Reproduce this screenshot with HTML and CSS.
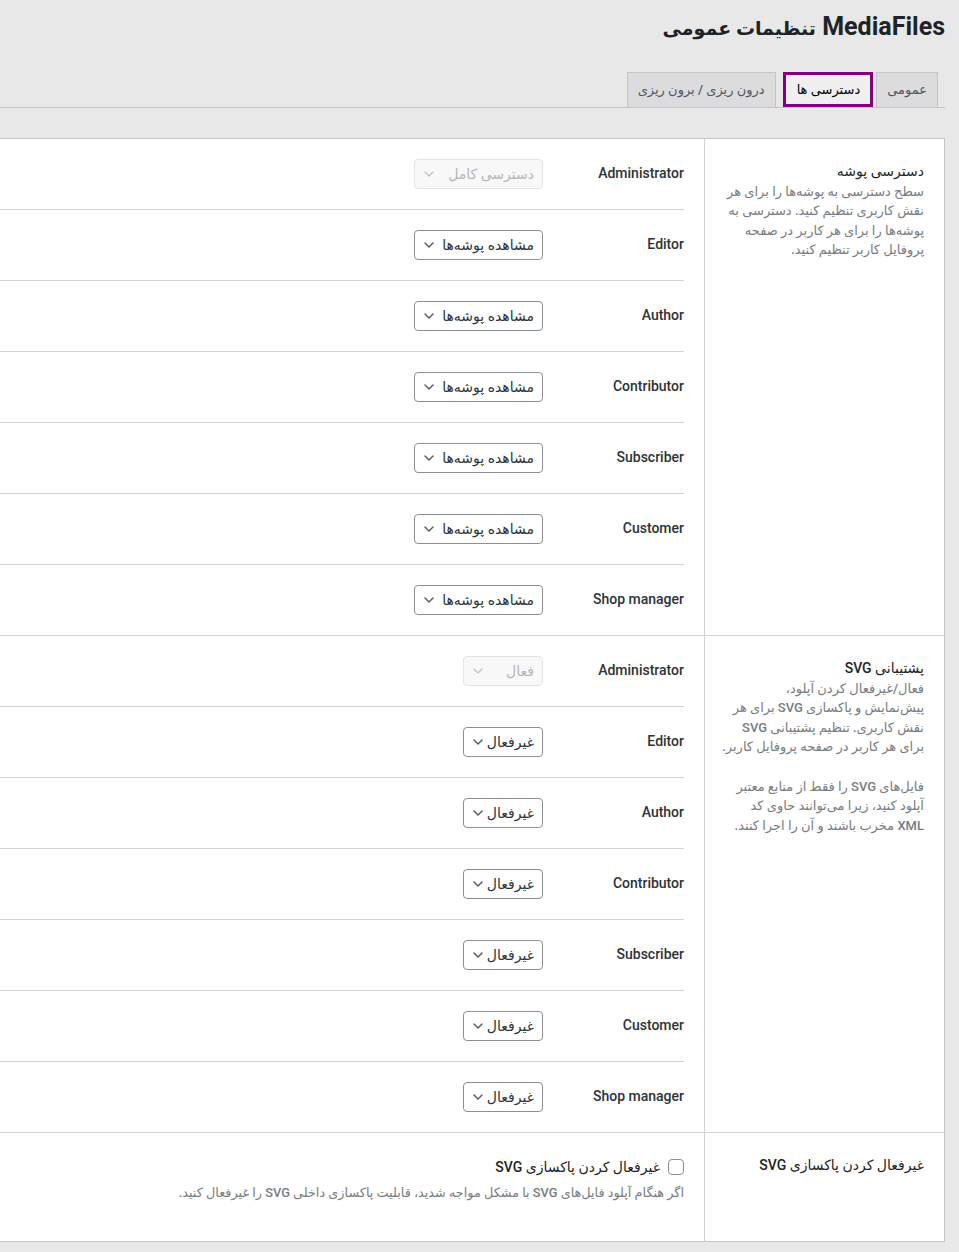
FILE: index.html
```html
<!DOCTYPE html>
<html lang="fa" dir="rtl">
<head>
<meta charset="utf-8">
<title>MediaFiles</title>
<link rel="stylesheet" href="styles.css">
</head>
<body>
<div class="wrap">
  <h1 class="title">MediaFiles <span class="title-fa">تنظیمات عمومی</span></h1>
  <nav class="tabs">
    <a class="tab tab-first">عمومی</a>
    <a class="tab tab-active">دسترسی ها</a>
    <a class="tab">درون ریزی / برون ریزی</a>
  </nav>

  <div class="panel">
    <section class="sec">
      <div class="side">
        <h3 class="side-title">دسترسی پوشه</h3>
        <p class="side-desc">سطح دسترسی به پوشه‌ها را برای هر<br>نقش کاربری تنظیم کنید. دسترسی به<br>پوشه‌ها را برای هر کاربر در صفحه<br>پروفایل کاربر تنظیم کنید.</p>
      </div>
      <div class="main">
        <div class="row"><div class="lbl">Administrator</div><div class="sel sel-wide is-disabled"><span>دسترسی کامل</span><svg class="chev" width="10" height="6" viewBox="0 0 10 6"><path d="M1 1l4 4 4-4"/></svg></div></div>
        <div class="row"><div class="lbl">Editor</div><div class="sel sel-wide"><span>مشاهده پوشه‌ها</span><svg class="chev" width="10" height="6" viewBox="0 0 10 6"><path d="M1 1l4 4 4-4"/></svg></div></div>
        <div class="row"><div class="lbl">Author</div><div class="sel sel-wide"><span>مشاهده پوشه‌ها</span><svg class="chev" width="10" height="6" viewBox="0 0 10 6"><path d="M1 1l4 4 4-4"/></svg></div></div>
        <div class="row"><div class="lbl">Contributor</div><div class="sel sel-wide"><span>مشاهده پوشه‌ها</span><svg class="chev" width="10" height="6" viewBox="0 0 10 6"><path d="M1 1l4 4 4-4"/></svg></div></div>
        <div class="row"><div class="lbl">Subscriber</div><div class="sel sel-wide"><span>مشاهده پوشه‌ها</span><svg class="chev" width="10" height="6" viewBox="0 0 10 6"><path d="M1 1l4 4 4-4"/></svg></div></div>
        <div class="row"><div class="lbl">Customer</div><div class="sel sel-wide"><span>مشاهده پوشه‌ها</span><svg class="chev" width="10" height="6" viewBox="0 0 10 6"><path d="M1 1l4 4 4-4"/></svg></div></div>
        <div class="row"><div class="lbl">Shop manager</div><div class="sel sel-wide"><span>مشاهده پوشه‌ها</span><svg class="chev" width="10" height="6" viewBox="0 0 10 6"><path d="M1 1l4 4 4-4"/></svg></div></div>
      </div>
    </section>

    <section class="sec">
      <div class="side">
        <h3 class="side-title">پشتیبانی SVG</h3>
        <p class="side-desc">فعال/غیرفعال کردن آپلود،<br>پیش‌نمایش و پاکسازی SVG برای هر<br>نقش کاربری. تنظیم پشتیبانی SVG<br>برای هر کاربر در صفحه پروفایل کاربر.</p>
        <p class="side-desc side-gap">فایل‌های SVG را فقط از منابع معتبر<br>آپلود کنید، زیرا می‌توانند حاوی کد<br>XML مخرب باشند و آن را اجرا کنند.</p>
      </div>
      <div class="main">
        <div class="row"><div class="lbl">Administrator</div><div class="sel sel-narrow is-disabled"><span>فعال</span><svg class="chev" width="10" height="6" viewBox="0 0 10 6"><path d="M1 1l4 4 4-4"/></svg></div></div>
        <div class="row"><div class="lbl">Editor</div><div class="sel sel-narrow"><span>غیرفعال</span><svg class="chev" width="10" height="6" viewBox="0 0 10 6"><path d="M1 1l4 4 4-4"/></svg></div></div>
        <div class="row"><div class="lbl">Author</div><div class="sel sel-narrow"><span>غیرفعال</span><svg class="chev" width="10" height="6" viewBox="0 0 10 6"><path d="M1 1l4 4 4-4"/></svg></div></div>
        <div class="row"><div class="lbl">Contributor</div><div class="sel sel-narrow"><span>غیرفعال</span><svg class="chev" width="10" height="6" viewBox="0 0 10 6"><path d="M1 1l4 4 4-4"/></svg></div></div>
        <div class="row"><div class="lbl">Subscriber</div><div class="sel sel-narrow"><span>غیرفعال</span><svg class="chev" width="10" height="6" viewBox="0 0 10 6"><path d="M1 1l4 4 4-4"/></svg></div></div>
        <div class="row"><div class="lbl">Customer</div><div class="sel sel-narrow"><span>غیرفعال</span><svg class="chev" width="10" height="6" viewBox="0 0 10 6"><path d="M1 1l4 4 4-4"/></svg></div></div>
        <div class="row"><div class="lbl">Shop manager</div><div class="sel sel-narrow"><span>غیرفعال</span><svg class="chev" width="10" height="6" viewBox="0 0 10 6"><path d="M1 1l4 4 4-4"/></svg></div></div>
      </div>
    </section>

    <section class="sec sec-last">
      <div class="side">
        <h3 class="side-title">غیرفعال کردن پاکسازی SVG</h3>
      </div>
      <div class="main main-pad">
        <label class="check-line"><span class="checkbox"></span><span>غیرفعال کردن پاکسازی SVG</span></label>
        <p class="check-desc">اگر هنگام آپلود فایل‌های SVG با مشکل مواجه شدید، قابلیت پاکسازی داخلی SVG را غیرفعال کنید.</p>
      </div>
    </section>
  </div>
</div>
</body>
</html>
```

FILE: styles.css
```css
html, body {
  margin: 0;
  padding: 0;
  background: #e8e8e8;
}

body {
  font-family: Roboto, "DejaVu Sans", sans-serif;
  font-size: 14px;
  color: #1d2327;
  overflow: hidden;
}

.wrap {
  padding-right: 14px;
  margin-left: -60px;
}

.title {
  margin: 0;
  padding-top: 10px;
  height: 34px;
  font-size: 25px;
  font-weight: 700;
  line-height: 34px;
  color: #1d2327;
}

.title-fa {
  font-size: 19px;
}

.tabs {
  display: flex;
  align-items: flex-end;
  margin-top: 28px;
  padding-right: 7px;
  border-bottom: 1px solid #c3c4c7;
}

.tab {
  box-sizing: border-box;
  height: 35px;
  line-height: 33px;
  padding: 0 10px;
  border: 1px solid #c3c4c7;
  border-bottom: none;
  background: #dcdcde;
  color: #50575e;
  font-size: 13px;
  font-weight: 500;
  white-space: nowrap;
  margin-left: 7px;
}

.tab-first {
  margin-left: 3px;
}

.tab-active {
  border: 3px solid #800080;
  background: #f0f0f1;
  color: #000;
  line-height: 29px;
  padding: 0 10px 0 11px;
}

.panel {
  margin-top: 30px;
  background: #fff;
  border: 1px solid #c3c4c7;
}

.sec {
  display: flex;
  border-bottom: 1px solid #d3d3d6;
}

.sec-last {
  border-bottom: none;
  min-height: 108px;
}

.side {
  box-sizing: border-box;
  width: 240px;
  flex: 0 0 240px;
  padding: 23px 20px 20px 20px;
  border-left: 1px solid #d3d3d6;
}

.side-title {
  margin: 0;
  font-size: 14px;
  font-weight: 500;
  line-height: 19.6px;
  color: #1d2327;
}

.side-desc {
  margin: 0;
  font-size: 13px;
  font-weight: 500;
  line-height: 19.6px;
  color: #787c82;
  white-space: nowrap;
}

.side-gap {
  margin-top: 19.6px;
}

.main {
  flex: 1;
  padding-right: 20px;
}

.row {
  display: flex;
  align-items: center;
  height: 70px;
  border-bottom: 1px solid #d3d3d6;
}

.row:last-child {
  border-bottom: none;
}

.lbl {
  width: 141px;
  flex: 0 0 141px;
  direction: ltr;
  text-align: right;
  font-weight: 500;
  color: #2c3338;
  margin-top: -2px;
}

.sel {
  box-sizing: border-box;
  display: flex;
  align-items: center;
  justify-content: space-between;
  height: 30px;
  padding: 0 8px 0 9px;
  border: 1px solid #8c8f94;
  border-radius: 4px;
  background: #fff;
  color: #2c3338;
  font-weight: 500;
  white-space: nowrap;
  margin-top: -1px;
}

.sel-wide {
  width: 129px;
}

.sel-narrow {
  width: 80px;
}

.chev path {
  fill: none;
  stroke: #50575e;
  stroke-width: 1.4;
  stroke-linecap: round;
  stroke-linejoin: round;
}

.is-disabled {
  border-color: #e2e3e5;
  background: #f8f8f8;
  color: #b4b6b9;
}

.is-disabled .chev path {
  stroke: #c3c4c7;
}

.main-pad {
  padding-top: 24px;
}

.check-line {
  display: flex;
  align-items: center;
  gap: 8px;
  line-height: 20px;
  font-weight: 500;
  color: #1d2327;
}

.checkbox {
  box-sizing: border-box;
  width: 16px;
  height: 16px;
  border: 1px solid #8c8f94;
  border-radius: 4px;
  background: #fff;
}

.check-desc {
  margin: 6px 0 0 0;
  font-size: 12.8px;
  line-height: 20px;
  font-weight: 500;
  color: #787c82;
}
```
